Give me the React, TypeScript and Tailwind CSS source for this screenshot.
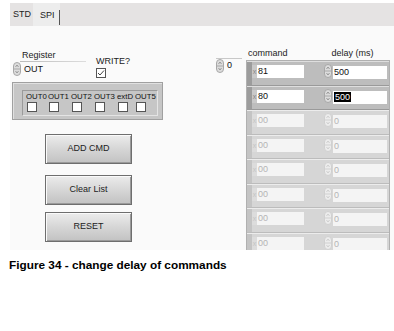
import React from 'react';

const ui = { fontFamily: '"Liberation Sans", Arial, sans-serif' };

function Spin({ faded = false }: { faded?: boolean }) {
  const c = faded ? '#d0d0d0' : '#a8a8a8';
  return (
    <svg width="8" height="14" viewBox="0 0 8 14" className="shrink-0">
      <rect x="0.5" y="0.5" width="7" height="13" rx="3.5" fill={faded ? '#ececec' : '#dcdcdc'} stroke={c} />
      <line x1="1" y1="7" x2="7" y2="7" stroke={c} />
      <path d="M2.5 5 L4 3 L5.5 5" fill="none" stroke={faded ? '#c8c8c8' : '#888'} strokeWidth="0.8" />
      <path d="M2.5 9 L4 11 L5.5 9" fill="none" stroke={faded ? '#c8c8c8' : '#888'} strokeWidth="0.8" />
    </svg>
  );
}

function Check({ on = false }: { on?: boolean }) {
  return (
    <div className="w-[10px] h-[10px] bg-white border border-[#555] flex items-center justify-center">
      {on && (
        <svg width="8" height="8" viewBox="0 0 8 8">
          <path d="M1 4 L3 6 L7 1.5" fill="none" stroke="#444" strokeWidth="1" />
        </svg>
      )}
    </div>
  );
}

function Row({ cmd, delay, active, selected }: { cmd: string; delay: string; active: boolean; selected?: boolean }) {
  return (
    <div
      className={
        'h-[24.5px] flex items-start border-b border-t ' +
        (active ? 'bg-[#bdbdbd] border-t-[#dedede] border-b-[#9a9a9a]' : 'bg-[#d6d6d6] border-t-[#ececec] border-b-[#bcbcbc]')
      }
    >
      <div className={'w-[5px] h-full ' + (active ? 'bg-[#9c9c9c]' : 'bg-[#c4c4c4]')} />
      <div className={'w-[5px] mt-[3px] h-[13px] text-[7px] leading-[13px] text-center ' + (active ? 'bg-[#c9c9c9] text-[#888]' : 'bg-[#dcdcdc] text-[#c4c4c4]')}>x</div>
      <div
        className={
          'mt-[3px] w-[47px] h-[13px] text-[9px] leading-[13px] pl-[1px] ' +
          (active ? 'bg-white text-[#111]' : 'bg-[#f4f4f4] text-[#b4b4b4]')
        }
      >
        {cmd}
      </div>
      <div className="w-[20px]" />
      <div className="mt-[2px]">
        <Spin faded={!active} />
      </div>
      <div
        className={
          'ml-[1px] mt-[4px] w-[54px] h-[13px] text-[9px] leading-[13px] pl-[1px] ' +
          (active ? 'bg-white text-[#111]' : 'bg-[#f4f4f4] text-[#b4b4b4]')
        }
      >
        {selected ? <span className="bg-black text-white px-[1px]">{delay}</span> : delay}
      </div>
    </div>
  );
}

function Btn({ label }: { label: string }) {
  return (
    <div className="w-[87px] h-[30px] border border-[#6e6e6e] bg-gradient-to-b from-[#ececec] via-[#d6d6d6] to-[#c2c2c2] shadow-[inset_1px_1px_0_#fafafa,inset_-1px_-1px_0_#9a9a9a] flex items-center justify-center text-[9px] text-[#222]">
      {label}
    </div>
  );
}

export default function App() {
  const rows = [
    { cmd: '81', delay: '500', active: true },
    { cmd: '80', delay: '500', active: true, selected: true },
    { cmd: '00', delay: '0', active: false },
    { cmd: '00', delay: '0', active: false },
    { cmd: '00', delay: '0', active: false },
    { cmd: '00', delay: '0', active: false },
    { cmd: '00', delay: '0', active: false },
    { cmd: '00', delay: '0', active: false },
  ];
  const outs = [
    { l: 'OUT0', w: 22 },
    { l: 'OUT1', w: 23 },
    { l: 'OUT2', w: 23 },
    { l: 'OUT3', w: 23 },
    { l: 'extD', w: 18 },
    { l: 'OUT5', w: 22 },
  ];

  return (
    <div className="w-[394px] h-[331px] bg-white overflow-hidden" style={ui}>
      <div className="ml-[10px] pt-[3px] w-[384px]">
        <div className="h-[23px] bg-[#e5e3e3] flex items-end text-[9px] text-[#222]">
          <div className="w-[23px] h-[23px] flex items-center pl-[3px]">STD</div>
          <div className="w-[27px] h-[23px] bg-[#ededed] flex items-start pt-[6px] pl-[7px] relative">
            SPI
            <div className="absolute right-0 top-[7px] w-[1px] h-[15px] bg-[#555]" />
          </div>
        </div>
        <div className="h-[224px] bg-[#fafafa] flex overflow-hidden">
          <div className="w-[160px] shrink-0">
            <div className="flex mt-[24px]">
              <div className="ml-[3px]">
                <div className="ml-[9px] text-[9px] leading-[11px] text-[#222]">Register</div>
                <div className="ml-[7px] w-[66px] h-[1px] bg-gradient-to-r from-[#bbb] to-[#ddd]" />
                <div className="flex items-center">
                  <Spin />
                  <span className="ml-[3px] text-[9px] leading-[12px] text-[#111]">OUT</span>
                </div>
              </div>
              <div className="ml-[10px] mt-[6px]">
                <div className="text-[9px] leading-[11px] text-[#222]">WRITE?</div>
                <div className="mt-[1px]">
                  <Check on />
                </div>
              </div>
            </div>
            <div className="mt-[4px] ml-[2px] w-[151px] h-[38px] bg-[#c6c6c6] border border-[#a0a0a0] shadow-[inset_1px_1px_0_#e0e0e0] pt-[7px] pl-[9px]">
              <div className="w-[136px] h-[26px] border-t border-l border-[#9a9a9a] border-b border-r border-b-[#e4e4e4] border-r-[#e4e4e4] flex pl-[3px]">
                {outs.map((o) => (
                  <div key={o.l} className="flex flex-col shrink-0" style={{ width: o.w }}>
                    <span className="text-[7.8px] leading-[11px] text-[#111] whitespace-nowrap">{o.l}</span>
                    <div className="ml-[1px]">
                      <Check />
                    </div>
                  </div>
                ))}
              </div>
            </div>
            <div className="ml-[35px] mt-[14px]">
              <Btn label="ADD CMD" />
              <div className="mt-[11px]">
                <Btn label="Clear List" />
              </div>
              <div className="mt-[7px]">
                <Btn label="RESET" />
              </div>
            </div>
          </div>
          <div className="ml-[46px] pt-[32px] w-[30px] shrink-0">
            <div className="w-[26px] h-[1px] bg-[#c8c8c8]" />
            <div className="flex items-start">
              <Spin />
              <span className="ml-[3px] text-[9px] leading-[12px] text-[#111]">0</span>
            </div>
          </div>
          <div>
            <div className="h-[34px] flex items-end text-[9px] leading-[11px] text-[#222] pb-[1px]">
              <span className="ml-[2px]">command</span>
              <span className="ml-[44px]">delay (ms)</span>
            </div>
            <div className="w-[144px] border border-[#b0b0b0] bg-[#d0d0d0]">
              {rows.map((r, i) => (
                <Row key={i} {...r} />
              ))}
            </div>
          </div>
        </div>
      </div>
      <div className="ml-[9px] mt-[7px] text-[11.8px] font-bold text-black" style={{ fontFamily: '"Liberation Sans", Arial, sans-serif' }}>
        Figure 34 - change delay of commands
      </div>
    </div>
  );
}
